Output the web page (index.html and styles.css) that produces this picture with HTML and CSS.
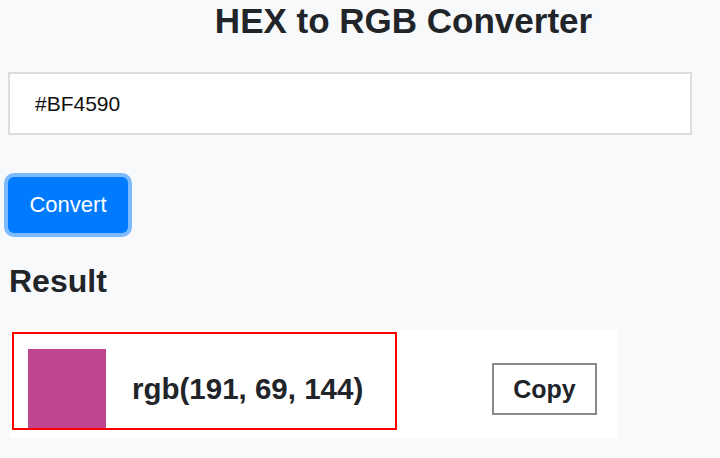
FILE: index.html
```html
<!DOCTYPE html>
<html lang="en">
<head>
<meta charset="utf-8">
<title>HEX to RGB Converter</title>
<link rel="stylesheet" href="styles.css">
</head>
<body>
<main class="page">
  <h1 class="title">HEX to RGB Converter</h1>
  <input class="hex-input" type="text" value="#BF4590">
  <button class="convert-btn" type="button">Convert</button>
  <h2 class="result-heading">Result</h2>
  <section class="result-card">
    <div class="result-main">
      <div class="swatch"></div>
      <span class="rgb-text">rgb(191, 69, 144)</span>
    </div>
    <button class="copy-btn" type="button">Copy</button>
  </section>
</main>
</body>
</html>
```

FILE: styles.css
```css
html, body {
  margin: 0;
  padding: 0;
  background: #f8f9fa;
  font-family: "Liberation Sans", Arial, sans-serif;
  color: #212529;
  overflow: hidden;
}

.page {
  display: flex;
  flex-direction: column;
  align-items: flex-start;
  padding-left: 8px;
}

.title {
  box-sizing: border-box;
  align-self: stretch;
  margin: 1px 0 0;
  padding-left: 79px;
  text-align: center;
  font-size: 35px;
  line-height: 40px;
  font-weight: bold;
  white-space: nowrap;
}

.hex-input {
  box-sizing: border-box;
  margin-top: 31px;
  width: 684px;
  height: 63px;
  border: 2px solid #dcdcdc;
  background: #fff;
  padding: 0 0 0 25px;
  font-family: "Liberation Sans", Arial, sans-serif;
  font-size: 21px;
  color: #111;
  outline: none;
}

.convert-btn {
  margin-top: 42px;
  width: 120px;
  height: 56px;
  border: none;
  border-radius: 6px;
  background: #007bff;
  color: #fff;
  font-family: "Liberation Sans", Arial, sans-serif;
  font-size: 22px;
  box-shadow: 0 0 0 4px rgba(0, 123, 255, 0.5);
  padding: 0;
}

.result-heading {
  margin: 30px 0 0 1px;
  font-size: 32px;
  line-height: 37px;
  font-weight: bold;
}

.result-card {
  box-sizing: border-box;
  margin: 30px 0 0 2px;
  width: 607px;
  height: 108px;
  background: #fff;
  padding: 2px 20px 0 2px;
  display: flex;
  align-items: flex-start;
  justify-content: space-between;
}

.result-main {
  box-sizing: border-box;
  width: 385px;
  height: 98px;
  border: 2px solid #ff0000;
  padding: 15px 0 0 14px;
  display: flex;
  align-items: center;
}

.swatch {
  width: 78px;
  height: 79px;
  background: #bf4590;
  flex: none;
}

.rgb-text {
  margin-left: 26px;
  font-size: 29.5px;
  font-weight: bold;
  color: #212529;
  white-space: nowrap;
}

.copy-btn {
  box-sizing: border-box;
  margin-top: 31px;
  width: 105px;
  height: 52px;
  border: 2px solid #8a8a8a;
  background: #fff;
  font-family: "Liberation Sans", Arial, sans-serif;
  font-size: 25px;
  font-weight: bold;
  color: #212529;
  padding: 0;
}
```
